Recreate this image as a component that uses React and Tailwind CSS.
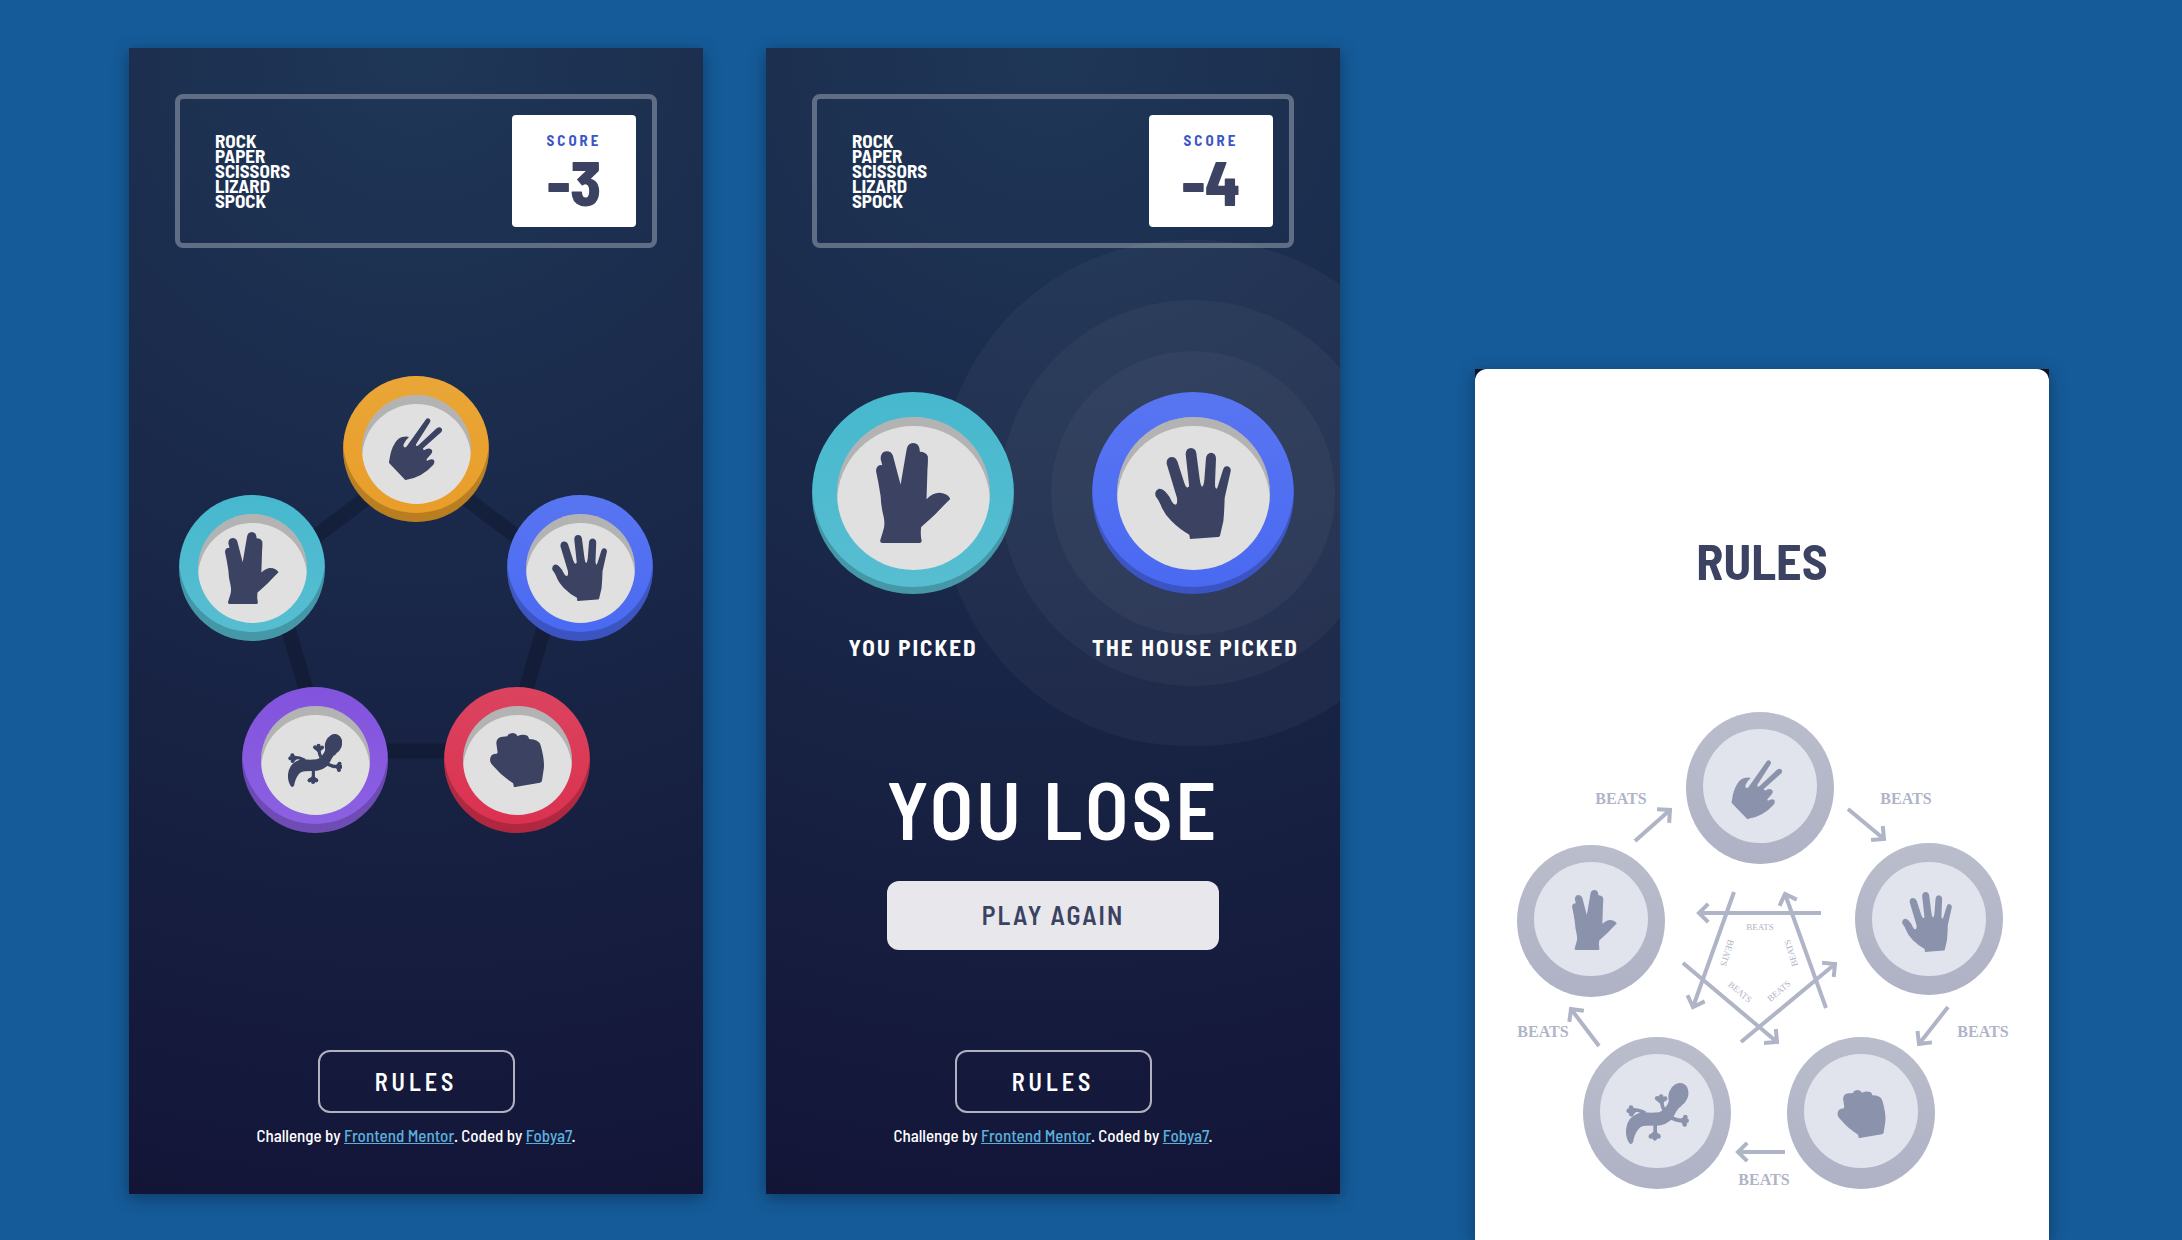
import React from "react";

const ICONS = {
  spock: {
    box: "0 0 225 301",
    art: (
      <path d="M18 301Q11 300 13 292Q19 274 24 255Q27 240 23 222Q15 190 14 160Q8 120 0 84Q1 68 14 66L19 67L14 48Q14 26 32 25Q46 25 51 38L74 126L92 20Q95 1 112 0Q128 1 131 17L132 26Q150 26 156 40Q157 58 155 78L152 169Q172 150 190 150Q214 151 224 168Q205 186 180 213Q160 232 136 253Q133 275 137 292Q139 300 132 301Z" />
    ),
  },
  paper: {
    box: "0 0 228 273",
    art: (
      <path d="M105 273L103 260Q75 245 50 220Q25 195 17 170Q12 158 2 145Q-3 128 12 122Q22 121 32 132Q45 146 50 160Q55 170 62 170Q68 168 66 150L35 47Q34 28 50 27Q62 27 67 40L88 105Q94 122 99 118Q103 116 102 110L92 18Q93 0 108 0Q122 1 124 16L134 92Q137 114 141 116Q146 114 148 95L153 30Q155 15 169 14Q183 16 183 32L180 105Q180 124 185 122Q188 118 190 110L204 65Q208 53 218 55Q229 59 227 70L209 150Q208 190 205 220L195 263Q193 268 188 267L105 273Z" />
    ),
  },
  scissors: {
    box: "0 0 160 186",
    art: (
      <path d="M50 186Q48 186 46 183L1 136Q-1 133 1 127Q5 95 18 75Q28 57 45 56Q55 54 60 57Q52 64 46 75Q41 83 45 87Q49 91 54 84L110 5Q115 -1 121 2Q126 6 123 13L83 76Q79 83 83 84Q86 84 90 80L143 31Q150 26 156 29Q162 35 157 42L103 90Q100 94 105 96Q109 96 112 93Q125 89 129 97Q131 102 127 107L114 122Q111 126 114 128Q116 128 120 126Q130 121 135 127Q138 133 133 140Q100 178 50 186Z" />
    ),
  },
  rock: {
    box: "0 0 163 163",
    art: (
      <path d="M72 163L70 152Q35 130 12 102Q0 92 0 80Q2 64 16 63Q22 64 23 58L19 30Q20 12 38 11Q46 11 52 10Q56 0 70 0Q80 2 83 9Q100 2 113 8Q117 12 118 18Q148 18 153 38Q166 85 162 110L157 143Q157 149 151 150L80 162Q74 164 72 163Z" />
    ),
  },
  lizard: {
    box: "24 23 190 184",
    art: (
      <g>
        <ellipse cx="182" cy="59" rx="29" ry="37" transform="rotate(22 182 59)" />
        <path d="M156 62Q154 84 144 95Q136 108 124 111Q100 114 78 111Q48 114 34 134Q22 152 24 176Q27 198 36 206Q41 209 45 202Q50 176 62 162Q70 152 84 152L126 151Q144 148 158 136Q168 126 176 108Q180 98 192 92Z" />
        <path
          d="M138 104Q132 92 131 72M82 114Q62 102 38 104M112 148V182M162 128Q180 138 204 137"
          fill="none"
          stroke="currentColor"
          strokeWidth="11"
        />
        <circle cx="118" cy="69" r="7" />
        <circle cx="130" cy="64" r="7" />
        <circle cx="142" cy="70" r="7" />
        <path d="M114 74L130 88L146 74L130 62Z" />
        <circle cx="39" cy="97" r="7" />
        <circle cx="32" cy="107" r="7" />
        <circle cx="40" cy="117" r="7" />
        <path d="M38 92L60 106L40 123L30 107Z" />
        <circle cx="99" cy="184" r="7" />
        <circle cx="111" cy="190" r="7" />
        <circle cx="122" cy="184" r="7" />
        <path d="M95 180L111 166L127 180L111 192Z" />
        <circle cx="203" cy="126" r="7" />
        <circle cx="207" cy="137" r="7" />
        <circle cx="201" cy="148" r="7" />
        <path d="M203 120L185 135L200 153L210 137Z" />
      </g>
    ),
  },
};

function Hand({ name, className, ...rest }) {
  return (
    <svg viewBox={ICONS[name].box} className={className} fill="currentColor" aria-hidden="true" {...rest}>
      {ICONS[name].art}
    </svg>
  );
}

const NODES = [
  { name: "scissors", place: "left-[164px] top-0", ring: "from-[#e9a636] to-[#e99d29]", icon: "h-[62px]" },
  { name: "spock", place: "left-0 top-[119px]", ring: "from-[#46b8ce] to-[#58bed1]", icon: "h-[72px]" },
  { name: "paper", place: "left-[328px] top-[119px]", ring: "from-[#5875f1] to-[#4969f2]", icon: "h-[66px]" },
  { name: "lizard", place: "left-[63px] top-[311px]", ring: "from-[#8253dd] to-[#8c61e3]", icon: "h-[53px]" },
  { name: "rock", place: "left-[265px] top-[311px]", ring: "from-[#db435f] to-[#db304f]", icon: "h-[54px]" },
];

function Header({ score }) {
  return (
    <header className="flex items-center justify-between rounded-lg border-5 border-[#606e85] p-4">
      <h1 className="pb-0.5 pl-[19px] text-[19px] leading-[15px] font-bold text-white">
        ROCK
        <br />
        PAPER
        <br />
        SCISSORS
        <br />
        LIZARD
        <br />
        SPOCK
      </h1>
      <div className="flex h-28 w-[124px] flex-col items-center rounded bg-white pt-[15px] text-center">
        <span className="text-[15px] leading-5 font-bold tracking-[3px] text-[#3d56c6]">SCORE</span>
        <span className="text-[62px] leading-[62px] font-extrabold text-[#3b4262]">{score}</span>
      </div>
    </header>
  );
}

function Footer() {
  return (
    <footer className="mt-auto flex flex-col items-center">
      <button
        type="button"
        className="h-[63px] w-[197px] rounded-xl border-2 border-[#b1b1c0] text-2xl font-semibold tracking-[4px] text-white"
      >
        RULES
      </button>
      <p className="mt-3 text-[17px] leading-5 font-medium text-white">
        Challenge by{" "}
        <a href="#mentor" className="text-[#5cafd9] underline">
          Frontend Mentor
        </a>
        . Coded by{" "}
        <a href="#author" className="text-[#5cafd9] underline">
          Fobya7
        </a>
        .
      </p>
    </footer>
  );
}

function Phone({ score, className, children }) {
  return (
    <section
      className={
        "mb-[46px] flex min-h-[1146px] flex-col overflow-hidden bg-[radial-gradient(circle_at_top,#1f3757_0%,#131537_100%)] px-[46px] pt-[46px] pb-[49px] shadow-[0_4px_16px_rgba(0,0,0,0.35)] " +
        className
      }
    >
      <Header score={score} />
      {children}
      <Footer />
    </section>
  );
}

function Board() {
  return (
    <div className="relative mx-auto mt-32 h-[457px] w-[474px]">
      <svg viewBox="0 0 474 457" className="size-full" aria-hidden="true">
        <path
          d="M237 85L382 194L329 375H145L92 194Z"
          fill="none"
          stroke="#000"
          strokeOpacity="0.2"
          strokeWidth="15"
        />
      </svg>
      {NODES.map((n) => (
        <button
          key={n.name}
          type="button"
          aria-label={n.name}
          className={
            "absolute flex size-[146px] items-center justify-center rounded-full bg-linear-to-b shadow-[inset_0_-9px_0_rgba(0,0,0,0.2)] " +
            n.place +
            " " +
            n.ring
          }
        >
          <span className="flex size-[109px] items-center justify-center rounded-full bg-[#e0e0e0] shadow-[inset_0_9px_0_rgba(0,0,0,0.2)]">
            <Hand name={n.name} className={"text-[#3b4262] " + n.icon} />
          </span>
        </button>
      ))}
    </div>
  );
}

function Pick({ name, ring, icon, label }) {
  return (
    <figure className="flex w-[202px] flex-col">
      <div
        className={
          "flex size-[202px] items-center justify-center rounded-full bg-linear-to-b " + ring
        }
      >
        <span className="flex size-[153px] items-center justify-center rounded-full bg-[#e0e0e0] shadow-[inset_0_9px_0_rgba(0,0,0,0.2)]">
          <Hand name={name} className={"text-[#3b4262] " + icon} />
        </span>
      </div>
      <figcaption className="mt-[39px] text-center text-[23px] leading-7 font-bold tracking-[2px] whitespace-nowrap text-white">
        {label}
      </figcaption>
    </figure>
  );
}

const TOKENS = [
  { name: "scissors", cx: 260, cy: 97, iy: 95, x: 231, y: 69, w: 52, h: 59 },
  { name: "spock", cx: 91, cy: 230, iy: 228, x: 72, y: 199, w: 45, h: 60 },
  { name: "paper", cx: 429, cy: 228, iy: 228, x: 402, y: 201, w: 50, h: 60 },
  { name: "lizard", cx: 157, cy: 422, iy: 420, x: 126, y: 392, w: 63, h: 61 },
  { name: "rock", cx: 361, cy: 422, iy: 420, x: 337, y: 399, w: 49, h: 48 },
];

const ARROWS = [
  [135, 150, 170, 119],
  [348, 118, 384, 148],
  [448, 316, 419, 353],
  [285, 461, 238, 461],
  [99, 355, 71, 318],
  [321, 222, 199, 222],
  [234, 201, 193, 316],
  [183, 272, 277, 351],
  [241, 351, 335, 273],
  [326, 317, 285, 203],
];

const OUTER_LABELS = [
  [121, 113],
  [406, 113],
  [483, 346],
  [264, 494],
  [43, 346],
];

const INNER_LABELS = [
  [260, 236, 0],
  [227, 262, 107],
  [291, 262, -107],
  [240, 301, 40],
  [279, 300, -40],
];

function arrowPath([x1, y1, x2, y2]) {
  const a = Math.atan2(y2 - y1, x2 - x1);
  const barb = (t) => `${x2 - 13 * Math.cos(a + t)} ${y2 - 13 * Math.sin(a + t)}`;
  return `M${x1} ${y1}L${x2} ${y2}M${barb(0.78)}L${x2} ${y2}L${barb(-0.78)}`;
}

function RulesDiagram() {
  return (
    <svg viewBox="-3 0 530 510" className="mx-auto mt-[101px] w-[530px]" role="img" aria-label="What beats what">
      <defs>
        <linearGradient id="token" x1="0" y1="0" x2="0" y2="1">
          <stop offset="0" stopColor="#babdcb" />
          <stop offset="1" stopColor="#afb2c5" />
        </linearGradient>
      </defs>
      {TOKENS.map((t) => (
        <g key={t.name}>
          <ellipse cx={t.cx} cy={t.cy} rx="74" ry="76" fill="url(#token)" />
          <circle cx={t.cx} cy={t.iy} r="57" fill="#e1e4ed" />
          <Hand name={t.name} x={t.x} y={t.y} width={t.w} height={t.h} className="text-[#8b92ac]" />
        </g>
      ))}
      <g fill="none" stroke="#b0b4c7" strokeWidth="4">
        {ARROWS.map((a) => (
          <path key={a.join()} d={arrowPath(a)} />
        ))}
      </g>
      <g fill="#b0b4c7" textAnchor="middle" className="font-['Liberation_Serif',serif]">
        {OUTER_LABELS.map(([x, y]) => (
          <text key={x + "-" + y} x={x} y={y} className="text-[16px] font-bold">
            BEATS
          </text>
        ))}
        {INNER_LABELS.map(([x, y, r]) => (
          <text key={x} x={x} y={y + 3} transform={`rotate(${r} ${x} ${y})`} className="text-[9px]">
            BEATS
          </text>
        ))}
      </g>
    </svg>
  );
}

export default function App() {
  return (
    <main className="grid min-h-screen grid-cols-[574fr_63fr_574fr_135fr_574fr] bg-[#155b99] pt-12 pr-[133px] pl-[129px] font-['Barlow_Semi_Condensed','Roboto_Condensed','Open_Sans',sans-serif]">
      <Phone score="-3" className="col-start-1">
        <Board />
      </Phone>
      <Phone score="-4" className="col-start-3">
        <div className="mt-36 flex justify-between">
          <Pick
            name="spock"
            ring="relative z-10 from-[#46b8ce] to-[#58bed1] shadow-[inset_0_-7px_0_rgba(0,0,0,0.2)]"
            icon="h-[100px]"
            label="YOU PICKED"
          />
          <Pick
            name="paper"
            ring="from-[#5875f1] to-[#4969f2] shadow-[inset_0_-7px_0_rgba(0,0,0,0.2),0_0_0_41px_rgba(255,255,255,0.035),0_0_0_92px_rgba(255,255,255,0.035),0_0_0_152px_rgba(255,255,255,0.035)]"
            icon="h-[91px]"
            label="THE HOUSE PICKED"
          />
        </div>
        <h2 className="mt-[107px] text-center text-[80px] leading-20 font-semibold tracking-[3px] text-white">
          YOU LOSE
        </h2>
        <button
          type="button"
          className="mx-auto mt-[33px] h-[69px] w-[332px] rounded-xl bg-[#e8e7ec] pb-0.5 text-[26px] font-semibold tracking-[2px] text-[#3b4262]"
        >
          PLAY AGAIN
        </button>
      </Phone>
      <aside className="col-start-5 mt-[321px] flex bg-[#0e1526] shadow-[0_4px_16px_rgba(0,0,0,0.35)]">
        <div className="w-full rounded-t-xl bg-white pt-[161px]">
          <h2 className="text-center text-[50px] leading-[60px] font-bold text-[#3b4262]">RULES</h2>
          <RulesDiagram />
        </div>
      </aside>
    </main>
  );
}
